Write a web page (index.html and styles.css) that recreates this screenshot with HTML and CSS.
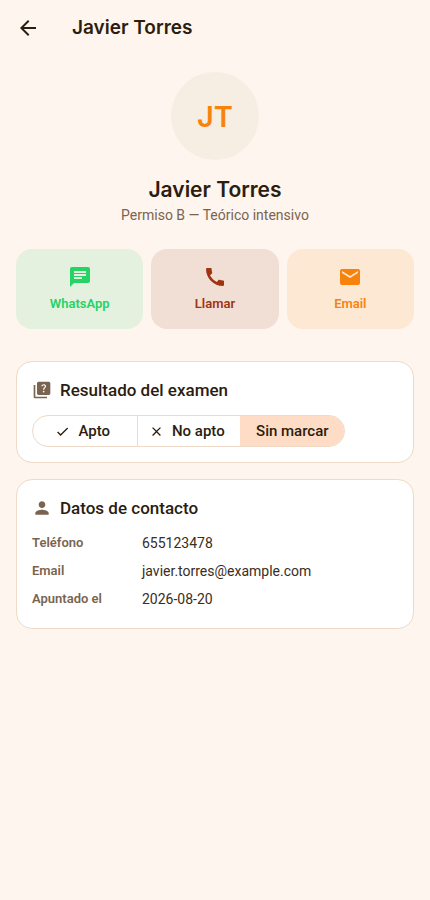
FILE: index.html
```html
<!DOCTYPE html>
<html lang="es">
<head>
<meta charset="utf-8">
<meta name="viewport" content="width=device-width, initial-scale=1">
<title>Javier Torres</title>
<link rel="stylesheet" href="styles.css">
</head>
<body>
<header class="app-bar">
  <button class="back" type="button" aria-label="Volver">
    <svg class="icon" viewBox="0 0 24 24"><path d="M20 11H7.83l5.59-5.59L12 4l-8 8 8 8 1.41-1.41L7.83 13H20z"/></svg>
  </button>
  <h1 class="app-title">Javier Torres</h1>
</header>
<main class="content">
  <section class="profile">
    <div class="avatar">JT</div>
    <h2 class="name">Javier Torres</h2>
    <p class="course">Permiso B — Teórico intensivo</p>
  </section>

  <nav class="actions">
    <a class="action whatsapp" href="#whatsapp">
      <svg class="icon" viewBox="0 0 24 24"><path d="M20 2H4c-1.1 0-1.99.9-1.99 2L2 22l4-4h14c1.1 0 2-.9 2-2V4c0-1.1-.9-2-2-2zM6 9h12v2H6V9zm8 5H6v-2h8v2zm4-6H6V6h12v2z"/></svg>
      WhatsApp
    </a>
    <a class="action call" href="#llamar">
      <svg class="icon" viewBox="0 0 24 24"><path d="M20.01 15.38c-1.23 0-2.42-.2-3.53-.56-.35-.12-.74-.03-1.01.24l-1.57 1.97c-2.83-1.35-5.48-3.9-6.89-6.83l1.95-1.66c.27-.28.35-.67.24-1.02-.37-1.11-.56-2.3-.56-3.53 0-.54-.45-.99-.99-.99H4.19C3.65 3 3 3.24 3 3.99 3 13.28 10.73 21 20.01 21c.71 0 .99-.63.99-1.18v-3.45c0-.54-.45-.99-.99-.99z"/></svg>
      Llamar
    </a>
    <a class="action email" href="#email">
      <svg class="icon" viewBox="0 0 24 24"><path d="M20 4H4c-1.1 0-1.99.9-1.99 2L2 18c0 1.1.9 2 2 2h16c1.1 0 2-.9 2-2V6c0-1.1-.9-2-2-2zm0 4l-8 5-8-5V6l8 5 8-5v2z"/></svg>
      Email
    </a>
  </nav>

  <section class="card">
    <h3 class="card-title">
      <svg class="icon-small" viewBox="0 0 24 24"><path d="M4 6H2v14c0 1.1.9 2 2 2h14v-2H4V6zm16-4H8c-1.1 0-2 .9-2 2v12c0 1.1.9 2 2 2h12c1.1 0 2-.9 2-2V4c0-1.1-.9-2-2-2zm-5.99 13c-.59 0-1.05-.47-1.05-1.05 0-.59.47-1.04 1.05-1.04.59 0 1.04.45 1.04 1.04-.01.58-.45 1.05-1.04 1.05zm2.5-6.17c-.63.93-1.23 1.21-1.56 1.81-.13.24-.18.4-.18 1.18h-1.52c0-.41-.06-1.08.26-1.65.41-.73 1.18-1.16 1.63-1.8.48-.68.21-1.94-1.14-1.94-.88 0-1.32.67-1.5 1.23l-1.37-.57C11.51 5.96 12.52 5 13.99 5c1.23 0 2.08.56 2.51 1.26.37.61.58 1.73.01 2.57z"/></svg>
      Resultado del examen
    </h3>
    <div class="segments" role="radiogroup" aria-label="Resultado del examen">
      <label class="segment with-icon">
        <input type="radio" name="resultado" value="apto">
        <svg class="icon-tiny" viewBox="0 0 24 24"><path d="M9 16.17L4.83 12l-1.42 1.41L9 19 21 7l-1.41-1.41z"/></svg>
        Apto
      </label>
      <label class="segment with-icon">
        <input type="radio" name="resultado" value="no-apto">
        <svg class="icon-tiny" viewBox="0 0 24 24"><path d="M19 6.41L17.59 5 12 10.59 6.41 5 5 6.41 10.59 12 5 17.59 6.41 19 12 13.41 17.59 19 19 17.59 13.41 12z"/></svg>
        No apto
      </label>
      <label class="segment">
        <input type="radio" name="resultado" value="sin-marcar" checked>
        Sin marcar
      </label>
    </div>
  </section>

  <section class="card">
    <h3 class="card-title contact-title">
      <svg class="icon-small" viewBox="0 0 24 24"><path d="M12 12c2.21 0 4-1.79 4-4s-1.79-4-4-4-4 1.79-4 4 1.79 4 4 4zm0 2c-2.67 0-8 1.34-8 4v2h16v-2c0-2.66-5.33-4-8-4z"/></svg>
      Datos de contacto
    </h3>
    <dl class="details">
      <dt>Teléfono</dt><dd>655123478</dd>
      <dt>Email</dt><dd>javier.torres@example.com</dd>
      <dt>Apuntado el</dt><dd>2026-08-20</dd>
    </dl>
  </section>
</main>
</body>
</html>
```
FILE: styles.css
```css
* {
  box-sizing: border-box;
}

body {
  margin: 0;
  background: #fef5ee;
  color: #2b1d10;
  font-family: Roboto, sans-serif;
  font-size: 14px;
}

h1, h2, h3, p, dl, dd {
  margin: 0;
}

svg {
  display: block;
  flex: none;
  fill: currentColor;
}

.icon {
  width: 24px;
  height: 24px;
}

.icon-small {
  width: 20px;
  height: 20px;
  color: #7a6450;
}

.icon-tiny {
  width: 15px;
  height: 15px;
}

.app-bar {
  display: flex;
  align-items: center;
  gap: 16px;
  height: 56px;
}

.back {
  display: grid;
  place-items: center;
  width: 56px;
  height: 56px;
  padding: 0;
  border: 0;
  background: none;
  color: inherit;
}

.app-title,
.name {
  font-family: Inter, sans-serif;
  font-weight: 600;
  line-height: 30px;
}

.app-title {
  font-size: 19px;
}

.content {
  display: flex;
  flex-direction: column;
  padding: 16px;
}

.profile {
  display: flex;
  flex-direction: column;
  align-items: center;
  margin-bottom: 24px;
}

.avatar {
  display: grid;
  place-items: center;
  width: 88px;
  height: 88px;
  margin-bottom: 15px;
  border-radius: 50%;
  background: #f7eee3;
  color: #f8830c;
  font-family: Inter, sans-serif;
  font-size: 29px;
  font-weight: 600;
}

.name {
  font-size: 21px;
}

.course {
  color: #7a6450;
  line-height: 20px;
}

.actions {
  display: grid;
  grid-template-columns: repeat(3, 1fr);
  gap: 8px;
  margin-bottom: 32px;
}

.action {
  display: flex;
  flex-direction: column;
  align-items: center;
  gap: 6px;
  padding: 16px 8px;
  border-radius: 16px;
  font-size: 13px;
  font-weight: 600;
  line-height: 18px;
  text-decoration: none;
}

.whatsapp {
  background: #e3f1de;
  color: #25d366;
}

.call {
  background: #f1ded5;
  color: #9f3413;
}

.email {
  background: #fde8d4;
  color: #f8830c;
}

.card {
  padding: 15px;
  border: 1px solid #eedac6;
  border-radius: 16px;
  background: #fff;
}

.card + .card {
  margin-top: 16px;
}

.card-title {
  display: flex;
  align-items: center;
  gap: 8px;
  margin-bottom: 12px;
  font-size: 17px;
  font-weight: 500;
  line-height: 26px;
}

.contact-title {
  margin-bottom: 8px;
}

.segments {
  display: inline-grid;
  grid-template-columns: repeat(3, 1fr);
  vertical-align: top;
  overflow: hidden;
  border: 1px solid #eedac6;
  border-radius: 16px;
}

.segment {
  display: flex;
  align-items: center;
  justify-content: center;
  gap: 8px;
  padding: 0 15px;
  font-size: 15px;
  font-weight: 500;
  line-height: 30px;
  white-space: nowrap;
}

.with-icon {
  padding-left: 11px;
}

.segment + .segment {
  border-left: 1px solid #eedac6;
}

.segment input {
  position: absolute;
  opacity: 0;
  pointer-events: none;
}

.segment:has(input:checked) {
  border-color: #ffdcc5;
  background: #ffdcc5;
}

.details {
  display: grid;
  grid-template-columns: 110px 1fr;
  line-height: 28px;
}

.details dt {
  color: #7a6450;
  font-size: 13px;
  font-weight: 600;
}

.details dd {
  color: #3a2d21;
}
```
